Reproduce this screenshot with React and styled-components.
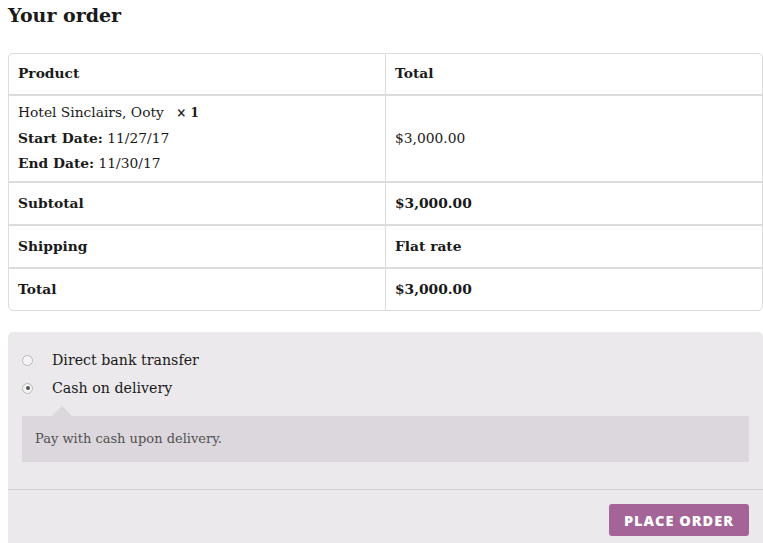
import React, { useState } from "react";
import styled, { createGlobalStyle } from "styled-components";

const GlobalStyle = createGlobalStyle`
  body {
    margin: 0;
    padding: 0 0 0 8px;
    background: #fff;
    font-family: "DejaVu Serif", "Liberation Serif", serif;
    color: #1a1a1a;
    overflow: hidden;
  }
`;

const Page = styled.div`
  width: 755px;
`;

const Heading = styled.h3`
  margin: 0;
  padding-top: 2px;
  font-size: 19px;
  line-height: 26px;
  font-weight: 700;
  color: #1a1a1a;
`;

const Table = styled.table`
  margin-top: 25px;
  width: 100%;
  table-layout: fixed;
  border-collapse: separate;
  border-spacing: 0;
  border: 1px solid #dcdcdc;
  border-radius: 5px;
  font-size: 13.8px;
  line-height: 25px;
`;

const pad = ({ $tall, $first }) => {
  if ($tall) return "4px 9px 5px";
  if ($first) return "7px 9px 8px";
  return "8px 9px";
};

const Cell = styled.td`
  padding: ${pad};
  text-align: left;
  vertical-align: middle;
  font-weight: ${({ $bold }) => ($bold ? 700 : 400)};
  border-top: ${({ $first }) => ($first ? "none" : "2px solid #dcdcdc")};
  border-left: ${({ $right }) => ($right ? "1px solid #dcdcdc" : "none")};
  width: ${({ $right }) => ($right ? "auto" : "358px")};
`;

const Qty = styled.strong`
  margin-left: 8px;
  font-size: 12px;
`;

const Line = styled.div``;

const Payment = styled.div`
  margin-top: 21px;
  background: #ebe9eb;
  border-radius: 5px;
  height: 230px;
`;

const Methods = styled.ul`
  list-style: none;
  margin: 0;
  padding: 14px 14px 27px;
  border-bottom: 1px solid #d3ced2;
`;

const Method = styled.li`
  display: flex;
  align-items: center;
  height: 28px;
  font-size: 14.2px;
  cursor: pointer;
`;

const Radio = styled.span`
  width: 9px;
  height: 9px;
  margin: 0 19px 0 0;
  border-radius: 50%;
  border: 1px solid #b8b8b8;
  background: #f4f4f4;
  display: flex;
  align-items: center;
  justify-content: center;
  &::after {
    content: "";
    width: 4px;
    height: 4px;
    border-radius: 50%;
    background: ${({ $checked }) => ($checked ? "#555" : "transparent")};
  }
`;

const Box = styled.div`
  position: relative;
  margin-top: 14px;
  background: #dcd7dc;
  padding: 12px 13px;
  font-size: 13px;
  line-height: 22px;
  color: #515151;
  &::before {
    content: "";
    position: absolute;
    top: -10px;
    left: 30px;
    border: 10px solid transparent;
    border-top: 0;
    border-bottom-color: #dcd7dc;
  }
`;

const Actions = styled.div`
  display: flex;
  justify-content: flex-end;
  padding: 14px 14px;
`;

const Button = styled.button`
  background: #a46497;
  color: #fff;
  border: none;
  border-radius: 3px;
  height: 32px;
  padding: 0 15px;
  font-family: "Open Sans", "Liberation Sans", sans-serif;
  font-weight: 800;
  font-size: 14.5px;
  letter-spacing: 1px;
  cursor: pointer;
`;

const methods = [
  { id: "bacs", label: "Direct bank transfer" },
  { id: "cod", label: "Cash on delivery" },
];

export default function App() {
  const [method, setMethod] = useState("cod");

  return (
    <Page>
      <GlobalStyle />
      <Heading>Your order</Heading>
      <Table>
        <thead>
          <tr>
            <Cell as="th" $first $bold>Product</Cell>
            <Cell as="th" $first $right $bold>Total</Cell>
          </tr>
        </thead>
        <tbody>
          <tr>
            <Cell $tall>
              <Line>
                Hotel Sinclairs, Ooty <Qty>× 1</Qty>
              </Line>
              <Line><b>Start Date:</b> 11/27/17</Line>
              <Line><b>End Date:</b> 11/30/17</Line>
            </Cell>
            <Cell $right>$3,000.00</Cell>
          </tr>
          <tr>
            <Cell $bold>Subtotal</Cell>
            <Cell $right $bold>$3,000.00</Cell>
          </tr>
          <tr>
            <Cell $bold>Shipping</Cell>
            <Cell $right $bold>Flat rate</Cell>
          </tr>
          <tr>
            <Cell $bold>Total</Cell>
            <Cell $right $bold>$3,000.00</Cell>
          </tr>
        </tbody>
      </Table>
      <Payment>
        <Methods>
          {methods.map((m) => (
            <Method key={m.id} onClick={() => setMethod(m.id)}>
              <Radio $checked={method === m.id} />
              {m.label}
            </Method>
          ))}
          {method === "cod" && <Box>Pay with cash upon delivery.</Box>}
        </Methods>
        <Actions>
          <Button>PLACE ORDER</Button>
        </Actions>
      </Payment>
    </Page>
  );
}
